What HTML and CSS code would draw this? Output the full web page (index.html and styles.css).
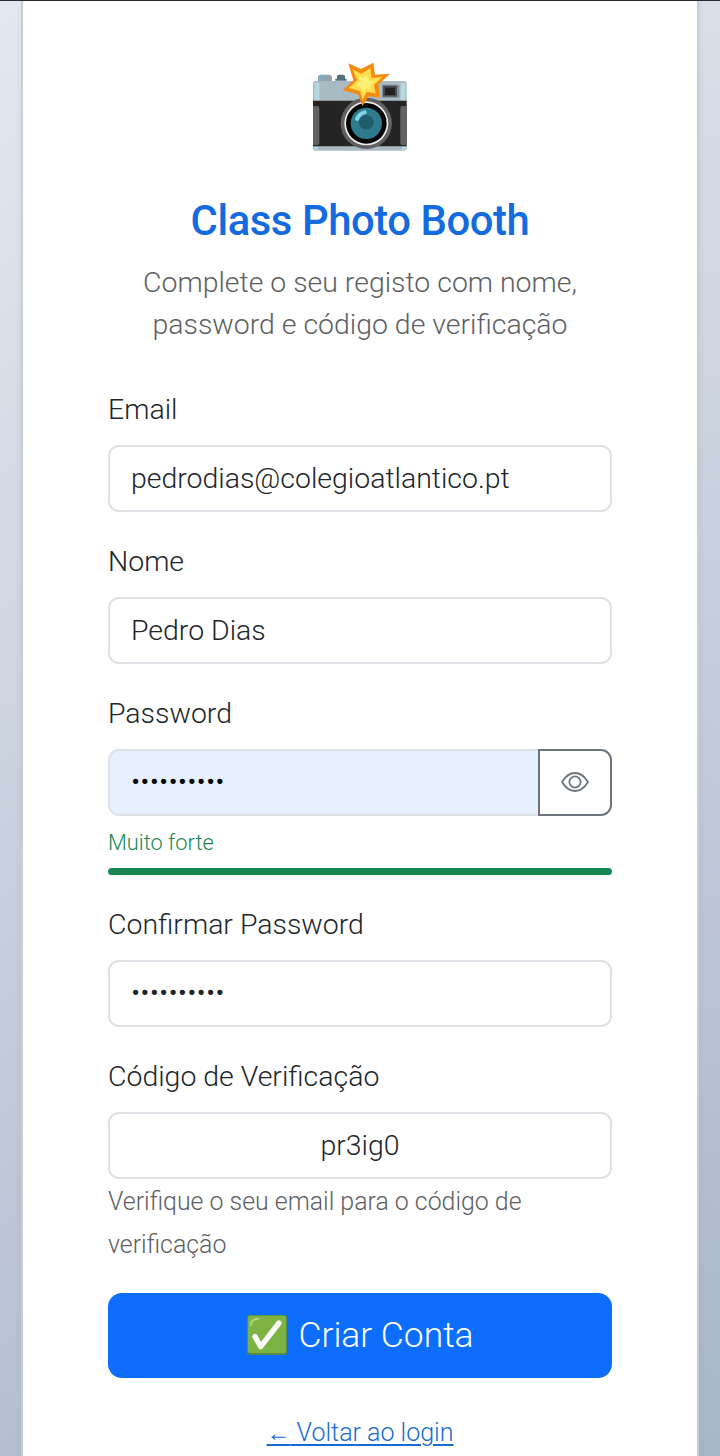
FILE: index.html
```html
<!DOCTYPE html>
<html lang="pt">
<head>
<meta charset="utf-8">
<title>Class Photo Booth</title>
<link rel="stylesheet" href="styles.css">
</head>
<body>
<main class="card">
  <header class="header">
    <svg class="camera" viewBox="0 0 360 345" aria-hidden="true">
      <path fill="#90a4ae" d="M54 96V84q0-10 10-10h22q10 0 10 10v12z"/>
      <path fill="#546e7a" d="M106 92v-6h5v-7q0-5 6-5h12q6 0 6 5v7h5v6z"/>
      <path fill="#82aebb" d="M54 96V84q0-10 10-10h6v22z"/>
      <rect x="39" y="93" width="281" height="209" rx="8" fill="#a9bac3"/>
      <path fill="#b5d9e1" d="M43 98h15v54H43zM302 98h14v54h-14zM43 290h10v10H43zM306 290h10v10h-10z"/>
      <path fill="#242424" d="M39 152h281v137H39z"/>
      <path fill="#626262" d="M39 168h13q6 0 6 6v105q0 6-6 6H39zM320 168h-13q-6 0-6 6v105q0 6 6 6h13z"/>
      <rect x="246" y="104" width="52" height="39" rx="3" fill="#81939d"/>
      <path fill="#4d4d4d" d="M249 107h42v33h-42z"/><path fill="#212121" d="M255 113h30v22h-30z"/>
      <circle cx="199" cy="220" r="77" fill="#616161"/>
      <circle cx="199" cy="220" r="66" fill="#eeeeee"/>
      <circle cx="199" cy="220" r="61" fill="#050505"/>
      <circle cx="199" cy="220" r="47" fill="#2d7b8d"/>
      <circle cx="199" cy="217" r="22" fill="#1e5d6b"/>
      <path d="M171 207q6-16 23-20" fill="none" stroke="#83d3e1" stroke-width="12" stroke-linecap="round"/>
      <path fill="#f58b12" d="M145 40 183 57 220 38 225 74 270 71 235 104 240 143 207 139 187 168 174 133 128 121 160 91z"/>
      <path fill="#ffdd4c" d="M158 58 184 72 211 54 215 84 248 80 222 105 227 130 200 126 188 149 180 123 146 114 172 91z"/>
      <path fill="#fff176" d="M172 75 188 84 203 75 205 92 226 92 211 105 211 119 196 116 188 128 183 112 166 107 181 93z"/>
    </svg>
    <h1 class="title">Class Photo Booth</h1>
    <p class="subtitle">Complete o seu registo com nome, password e código de verificação</p>
  </header>
  <form class="form">
    <div class="field">
      <label class="label" for="email">Email</label>
      <input class="input" id="email" type="text" value="pedrodias@colegioatlantico.pt">
    </div>
    <div class="field">
      <label class="label" for="nome">Nome</label>
      <input class="input" id="nome" type="text" value="Pedro Dias">
    </div>
    <div class="field">
      <label class="label" for="password">Password</label>
      <div class="input-group">
        <div class="input password autofilled" id="password"><span class="dots">••••••••••</span></div>
        <button class="toggle" type="button" aria-label="Mostrar password">
          <svg class="eye" viewBox="0 0 28 20" aria-hidden="true"><path d="M1 10Q6.500 1 14 1t13 9q-5.500 9-13 9T1 10z"/><circle cx="14" cy="10" r="5.600"/></svg>
        </button>
      </div>
      <span class="strength">Muito forte</span>
      <div class="meter"></div>
    </div>
    <div class="field">
      <label class="label" for="confirm">Confirmar Password</label>
      <div class="input password" id="confirm"><span class="dots">••••••••••</span></div>
    </div>
    <div class="field last">
      <label class="label" for="code">Código de Verificação</label>
      <input class="input centered" id="code" type="text" value="pr3ig0">
      <p class="help">Verifique o seu email para o código de verificação</p>
    </div>
    <button class="submit" type="button">
      <svg class="check" viewBox="0 0 120 120" aria-hidden="true"><rect width="120" height="120" rx="8" fill="#558b45"/><rect x="3" y="2" width="114" height="112" rx="7" fill="#7cb342"/><path d="M11 31q2-19 23-20" fill="none" stroke="#aed581" stroke-width="6" stroke-linecap="round"/><path d="m24 65 17 30 55-71" fill="none" stroke="#fafafa" stroke-width="16" stroke-linecap="round" stroke-linejoin="round"/></svg>
      <span>Criar Conta</span>
    </button>
    <a class="back" href="#"><span class="arrow">←</span> Voltar ao login</a>
  </form>
</main>
</body>
</html>
```
FILE: styles.css
```css
* { box-sizing: border-box; }
html { height: 100%; overflow: hidden; }
body {
  margin: 0;
  height: 1456px;
  overflow: hidden;
  padding: 0 21px;
  border-top: 1px solid #2b2b30;
  background: linear-gradient(155deg, #e4e8f0 0%, #c5cddb 55%, #a8b6ca 100%);
  font: 300 28.45px/42px Roboto, sans-serif;
  color: #212529;
}
.card {
  height: 1500px;
  padding: 49px 85px 0;
  background: #fff;
  border: solid #c9ccd1;
  border-width: 0 2px;
  box-shadow: 0 0 8px rgba(0, 0, 0, .06);
}
.header { display: flex; flex-direction: column; align-items: center; text-align: center; }
.camera { width: 120px; height: 115px; }
.title { margin: 31px 0 16px; font-size: 41.8px; line-height: 50px; font-weight: 500; letter-spacing: -.42px; color: #146be0; white-space: nowrap; }
.subtitle { margin: 0 0 43px; width: 450px; color: #5d6063; }
.form { display: flex; flex-direction: column; }
.field { display: flex; flex-direction: column; margin-bottom: 29px; }
.field.last { margin-bottom: 27px; }
.label { margin-bottom: 14px; }
.input {
  width: 100%;
  height: 67px;
  padding: 0 21px;
  border: 2px solid #dee2e6;
  border-radius: 11px;
  background: #fff;
  font: inherit;
  color: #212529;
  outline: 0;
}
.centered { text-align: center; }
.password { display: flex; align-items: center; padding-bottom: 1px; }
.dots { font-size: 28.45px; letter-spacing: .16px; color: #212529; }
.input-group { display: flex; }
.autofilled { flex: 1; border-radius: 11px 0 0 11px; border-right: 0; background: #e7f0fe; }
.autofilled .dots { color: #000; }
.toggle {
  display: flex;
  align-items: center;
  justify-content: center;
  width: 74px;
  height: 67px;
  padding: 0 0 2px;
  border: 2px solid #6c757d;
  border-radius: 0 11px 11px 0;
  background: #fff;
}
.eye { width: 28px; height: 20px; fill: none; stroke: #6c757d; stroke-width: 1.8; }
.strength { margin-top: 9px; font-size: 21.8px; line-height: 36px; color: #198754; }
.meter { height: 7px; margin-top: 7px; border-radius: 4px; background: #198754; }
.help { margin: 2px 0 0; font-size: 24.9px; line-height: 42.5px; color: #5d6063; }
.submit {
  display: flex;
  align-items: center;
  justify-content: center;
  gap: 11px;
  height: 85px;
  padding: 0 0 2px 1px;
  border: 0;
  border-radius: 14px;
  background: #0d6efd;
  color: #fff;
  font: 300 35.4px/42px Roboto, sans-serif;
}
.check { width: 40px; height: 40px; }
.back { align-self: center; margin-top: 34px; font-size: 25px; color: #176bd5; text-decoration-thickness: 2px; text-underline-offset: 3px; }
.arrow { font-size: 24px; }
```
